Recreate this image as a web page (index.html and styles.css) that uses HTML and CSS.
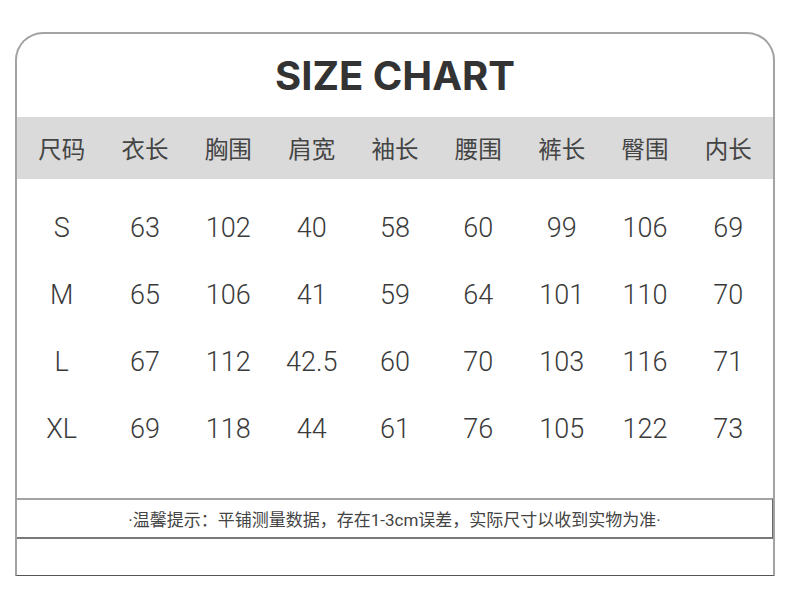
FILE: index.html
```html
<!DOCTYPE html>
<html lang="zh">
<head>
<meta charset="utf-8">
<title>Size Chart</title>
<link rel="stylesheet" href="styles.css">
</head>
<body>
<div class="frame">
  <h1 class="title">SIZE CHART</h1>
  <div class="grid head">
    <div>尺码</div><div>衣长</div><div>胸围</div><div>肩宽</div><div>袖长</div><div>腰围</div><div>裤长</div><div>臀围</div><div>内长</div>
  </div>
  <div class="body">
    <div class="grid row"><div>S</div><div>63</div><div>102</div><div>40</div><div>58</div><div>60</div><div>99</div><div>106</div><div>69</div></div>
    <div class="grid row"><div>M</div><div>65</div><div>106</div><div>41</div><div>59</div><div>64</div><div>101</div><div>110</div><div>70</div></div>
    <div class="grid row"><div>L</div><div>67</div><div>112</div><div>42.5</div><div>60</div><div>70</div><div>103</div><div>116</div><div>71</div></div>
    <div class="grid row"><div>XL</div><div>69</div><div>118</div><div>44</div><div>61</div><div>76</div><div>105</div><div>122</div><div>73</div></div>
  </div>
  <div class="notice">·温馨提示：平铺测量数据，存在1-3cm误差，实际尺寸以收到实物为准·</div>
  <div class="foot"></div>
</div>
</body>
</html>
```

FILE: styles.css
```css
html, body {
  margin: 0;
  padding: 0;
  background: #fff;
}
body {
  font-family: Roboto, "Noto Sans CJK SC", sans-serif;
  color: #444;
}
.frame {
  margin: 32px 0 0 15px;
  width: 756px;
  border: 2px solid #a3a3a3;
  border-bottom: 1px solid #555;
  border-radius: 28px 28px 0 0;
}
.title {
  margin: 0;
  height: 83px;
  display: flex;
  align-items: center;
  justify-content: center;
  font-family: Inter, "Liberation Sans", sans-serif;
  font-weight: 700;
  font-size: 40px;
  color: #333;
}
.grid {
  display: grid;
  grid-template-columns: repeat(9, 1fr);
  padding: 0 3px;
}
.grid > div {
  display: flex;
  align-items: center;
  justify-content: center;
}
.head {
  height: 62px;
  background: #dadada;
  font-family: "Noto Sans CJK SC", sans-serif;
  font-size: 23.5px;
  color: #444;
}
.body {
  padding: 15px 0 36px;
}
.row {
  height: 67px;
  font-size: 27px;
  font-weight: 300;
  color: #3a3a3a;
}
.notice {
  border-top: 2px solid #a3a3a3;
  border-bottom: 2px solid #7a7a7a;
  border-right: 1px solid #666;
  height: 37px;
  display: flex;
  align-items: center;
  justify-content: center;
  font-family: Roboto, "Noto Sans CJK SC", sans-serif;
  font-size: 17px;
  color: #444;
}
.foot {
  height: 36px;
}
```
